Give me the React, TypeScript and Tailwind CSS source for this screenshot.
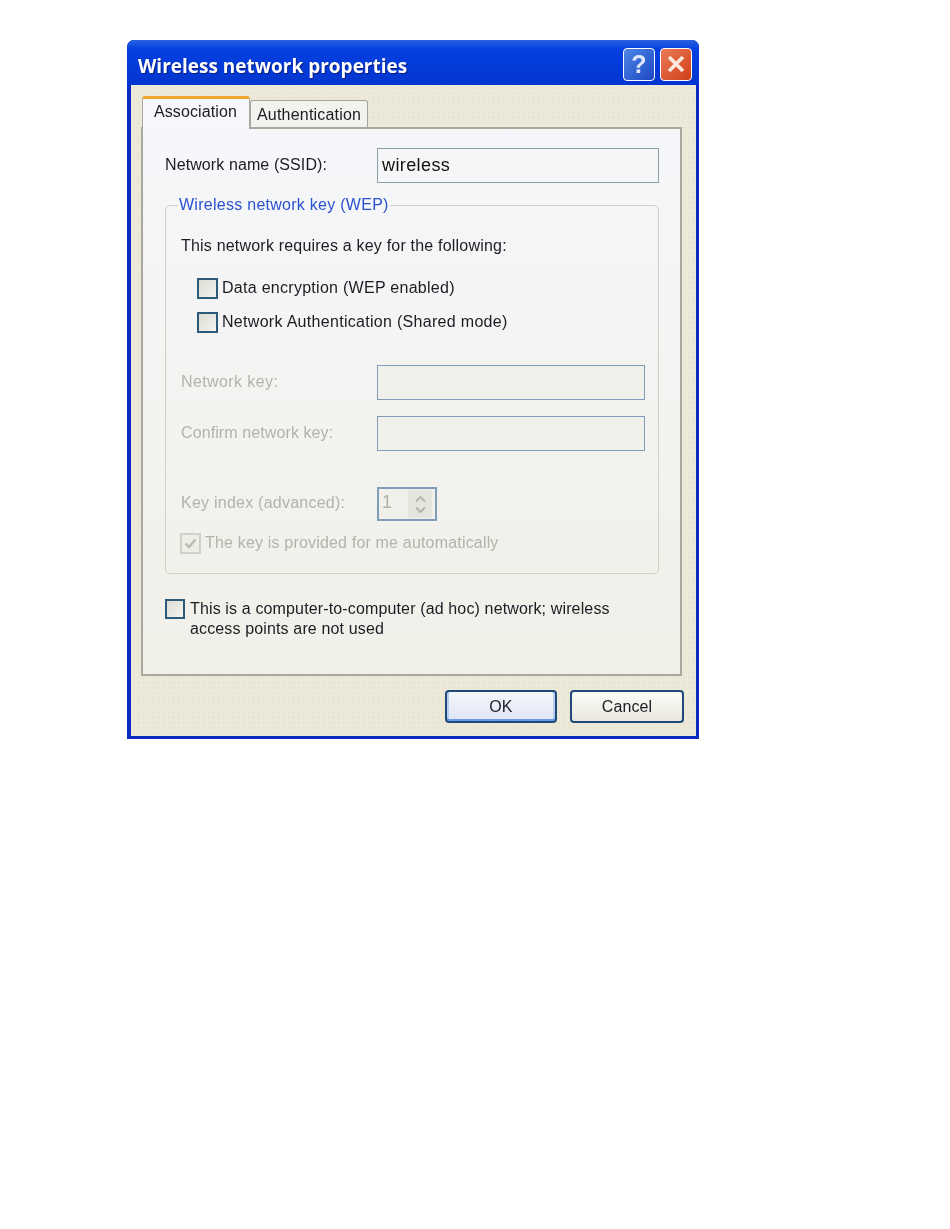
import React from "react";

const font = { fontFamily: '"Liberation Sans", Arial, sans-serif' };

function Check({ disabled, checked, small }: { disabled?: boolean; checked?: boolean; small?: boolean }) {
  return (
    <span
      className={
        "flex items-center justify-center shrink-0 border-2 " +
        (small ? "w-[20px] h-[20px] " : "w-[21px] h-[21px] ") +
        (disabled ? "border-[#cfd0c8] bg-[#eeede6]" : "border-[#2c5a78] bg-gradient-to-br from-[#dcdcd4] to-[#f4f4f0]")
      }
    >
      {checked && (
        <svg width="15" height="15" viewBox="0 0 15 15" fill="none">
          <path d="M2.5 7.5 L6 11 L12.5 3.5" stroke="#b9bab0" strokeWidth="2.4" />
        </svg>
      )}
    </span>
  );
}

function TextBox() {
  return <div className="h-[35px] w-[268px] border border-[#7f9db9] bg-[#f1f0ea]" />;
}

export default function App() {
  return (
    <div className="min-h-[1229px] bg-white pt-[40px] pl-[127px]" style={font}>
      <div className="w-[572px] h-[699px] flex flex-col rounded-t-[7px] bg-[#0831d9] border-l-[4px] border-r-[3px] border-b-[3px] border-[#0a2cc4] blur-[0.35px]">
        {/* Title bar */}
        <div className="h-[45px] -ml-[4px] -mr-[3px] shrink-0 rounded-t-[7px] flex items-center pt-[3px] pl-[11px] pr-[7px] bg-gradient-to-b from-[#2a63e0] via-[#0340e0] via-20% to-[#0335cf]">
          <span
            className="flex-1 pt-[5px] text-white text-[19px] font-bold [text-shadow:1px_1px_1px_#0a1f80]"
            style={{ fontFamily: '"Open Sans", sans-serif' }}
          >
            Wireless network properties
          </span>
          <div className="flex gap-[5px]">
            <div className="w-[32px] h-[33px] rounded-[4px] border-[1.5px] border-white bg-gradient-to-br from-[#4f86e6] to-[#1f45c4] flex items-center justify-center text-[#dfe8fb] text-[25px] font-bold leading-none">
              ?
            </div>
            <div className="w-[32px] h-[33px] rounded-[4px] border-[1.5px] border-white bg-gradient-to-br from-[#ea7a55] to-[#d03c12] flex items-center justify-center">
              <svg width="20" height="20" viewBox="0 0 20 20">
                <path d="M3 3 L17 17 M17 3 L3 17" stroke="#fde8e0" strokeWidth="3.6" />
              </svg>
            </div>
          </div>
        </div>

        {/* Client */}
        <div className="flex-1 bg-[#ece9d9] bg-[radial-gradient(#e5e2d0_1px,transparent_1px)] bg-[length:5px_5px] pl-[10px] pr-[13px] pt-[11px]">
          {/* Tabs */}
          <div className="flex items-end h-[31px] pl-[1px] text-[16px] text-[#1c1c24]">
            <div className="relative z-10 w-[108px] h-[33px] -mb-[2px] rounded-t-[3px] bg-[#f6f7fa] border-t-[3px] border-[#f0a530] border-x border-x-[#a9a99f] pl-[11px] pt-[1px] tracking-[0.1px]">
              Association
            </div>
            <div className="w-[118px] h-[27px] rounded-t-[3px] bg-[#f2f2ee] border-t border-x border-[#a4a49a] pl-[6px] pt-[2px] tracking-[0.2px]">
              Authentication
            </div>
          </div>

          {/* Panel */}
          <div className="w-[541px] h-[549px] border-2 border-[#a8a89e] bg-gradient-to-b from-[#f6f7fa] to-[#f0efe8] pl-[22px] pt-[19px] text-[16px] text-[#1c1c24]">
            <div className="flex items-center">
              <span className="w-[212px] tracking-[0.1px] -mt-[2px]">Network name (SSID):</span>
              <div className="h-[35px] w-[282px] border border-[#8a9ea8] bg-[#f5f6f8] flex items-center pl-[4px] text-[18px] tracking-[0.4px] text-[#111]">
                wireless
              </div>
            </div>

            <fieldset className="mt-[10px] w-[494px] h-[381px] border border-[#d2d0c4] rounded-[5px] pl-[15px]">
              <legend className="-ml-[3px] px-[1px] text-[#2a52cf] tracking-[0.27px]">Wireless network key (WEP)</legend>
              <div className="mt-[17px] tracking-[0.2px]">This network requires a key for the following:</div>
              <div className="mt-[18px] ml-[16px] flex items-center gap-[4px]">
                <Check />
                <span className="tracking-[0.28px]">Data encryption (WEP enabled)</span>
              </div>
              <div className="mt-[10px] ml-[16px] flex items-center gap-[4px]">
                <Check />
                <span className="tracking-[0.3px]">Network Authentication (Shared mode)</span>
              </div>

              <div className="text-[#b3b3aa]">
                <div className="mt-[31px] flex items-center">
                  <span className="w-[196px] tracking-[0.4px] -mt-[2px]">Network key:</span>
                  <TextBox />
                </div>
                <div className="mt-[16px] flex items-center">
                  <span className="w-[196px] tracking-[0.1px] -mt-[2px]">Confirm network key:</span>
                  <TextBox />
                </div>
                <div className="mt-[36px] flex items-center">
                  <span className="w-[196px] tracking-[0.24px] -mt-[3px]">Key index (advanced):</span>
                  <div className="w-[60px] h-[34px] border-2 border-[#7f9db9] bg-[#f1f0ea] flex items-center justify-between px-[3px] text-[18px]">
                    <span className="-mt-[3px]">1</span>
                    <div className="w-[24px] h-[28px] bg-[#e4e5dc] flex flex-col items-center justify-center gap-[5px]">
                      <svg width="11" height="6" viewBox="0 0 11 6">
                        <path d="M1 5.5 L5.5 1 L10 5.5" stroke="#b2b5aa" strokeWidth="2" fill="none" />
                      </svg>
                      <svg width="11" height="6" viewBox="0 0 11 6">
                        <path d="M1 .5 L5.5 5 L10 .5" stroke="#b2b5aa" strokeWidth="2" fill="none" />
                      </svg>
                    </div>
                  </div>
                </div>
                <div className="mt-[10px] -ml-[1px] flex items-center gap-[4px]">
                  <Check disabled checked />
                  <span className="tracking-[0.18px]">The key is provided for me automatically</span>
                </div>
              </div>
            </fieldset>

            <div className="mt-[25px] flex items-start gap-[5px] leading-[20px]">
              <Check small />
              <span className="mt-[-1px] pt-[1px] tracking-[0.14px]">
                This is a computer-to-computer (ad hoc) network; wireless
                <br />
                access points are not used
              </span>
            </div>
          </div>

          {/* Buttons */}
          <div className="flex justify-end gap-[13px] mt-[14px] -mr-[1px] text-[16px] text-[#1c1c24]">
            <button className="w-[112px] h-[33px] rounded-[4px] border-2 border-[#1d4a78] bg-gradient-to-b from-[#f4f6fb] to-[#dfe6f5] shadow-[inset_0_-2px_0_#6d98ea,inset_2px_0_0_#b9cdf0,inset_-2px_0_0_#b9cdf0] tracking-[0.1px]">
              OK
            </button>
            <button className="w-[114px] h-[33px] rounded-[4px] border-2 border-[#1d4a78] bg-gradient-to-b from-[#fbfbf8] to-[#e9e7de] tracking-[0.1px]">
              Cancel
            </button>
          </div>
        </div>
      </div>
    </div>
  );
}
